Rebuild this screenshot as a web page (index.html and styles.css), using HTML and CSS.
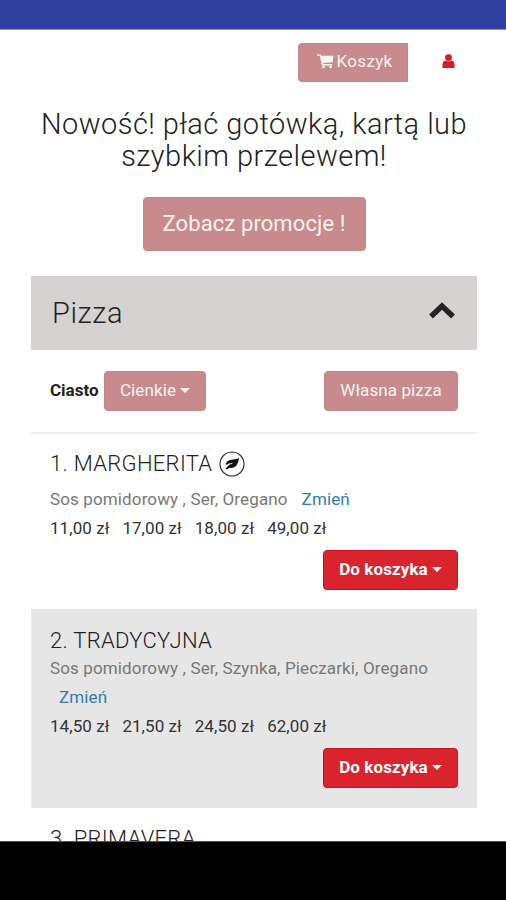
FILE: index.html
```html
<!DOCTYPE html>
<html lang="pl">
<head>
<meta charset="utf-8">
<title>Pizza</title>
<link rel="stylesheet" href="styles.css">
</head>
<body>
<div class="statusbar"></div>
<main class="page">
  <header class="topbar">
    <button class="btn btn-cart"><svg class="cart" viewBox="0 0 18 16"><path d="M0 1h4l.6 1.500H17.500L16.500 9.300 6.500 10l.3 1.300H16v1.400H5.300L3 2.700H0z" fill="currentColor"/><circle cx="6.800" cy="14.300" r="1.500" fill="currentColor"/><circle cx="14.500" cy="14.300" r="1.500" fill="currentColor"/></svg><span>Koszyk</span></button>
    <svg class="user" viewBox="0 0 14 16"><path d="M.5 15.500V12q0-4 3.500-4.500 3 2 6 0 3.500 .5 3.500 4.500v3.500z" fill="#dc1a24"/><circle cx="7" cy="4.300" r="3.700" fill="#dc1a24"/></svg>
  </header>
  <h1 class="headline">Nowość! płać gotówką, kartą lub<br>szybkim przelewem!</h1>
  <div class="promo"><button class="btn btn-promo">Zobacz promocje !</button></div>
  <section class="menu">
    <div class="category">
      <h2 class="category-name">Pizza</h2>
      <svg class="chevron" viewBox="0 0 28 19"><path d="M3 15.500 14 5l11 10.500" fill="none" stroke="#242424" stroke-width="5.500"/></svg>
    </div>
    <div class="options">
      <b class="options-label">Ciasto</b>
      <button class="btn btn-dough"><span>Cienkie</span><i class="caret"></i></button>
      <button class="btn btn-own">Własna pizza</button>
    </div>
    <article class="item item-first">
      <h3 class="name"><span>1. MARGHERITA</span><svg class="leaf" viewBox="0 0 26 26"><circle cx="13" cy="13" r="12" fill="#fff" stroke="#333" stroke-width="1.200"/><path d="M6.500 14C7.500 10 10.500 8.700 14 8.500q3.500-.3 6-1.300-1 6-3.500 8.300Q14 17.500 10.500 16.700L7.800 18.500 6.500 17.700Q9.500 13.500 14.500 11.800 9.500 12 6.500 14z" fill="#111"/></svg></h3>
      <p class="desc">Sos pomidorowy , Ser, Oregano<a class="change">Zmień</a></p>
      <p class="prices"><span>11,00 zł</span><span>17,00 zł</span><span>18,00 zł</span><span>49,00 zł</span></p>
      <div class="buy"><button class="btn btn-add"><span>Do koszyka</span><i class="caret"></i></button></div>
    </article>
    <article class="item item-alt">
      <h3 class="name"><span>2. TRADYCYJNA</span></h3>
      <p class="desc">Sos pomidorowy , Ser, Szynka, Pieczarki, Oregano<br><a class="change change-wrapped">Zmień</a></p>
      <p class="prices"><span>14,50 zł</span><span>21,50 zł</span><span>24,50 zł</span><span>62,00 zł</span></p>
      <div class="buy"><button class="btn btn-add"><span>Do koszyka</span><i class="caret"></i></button></div>
    </article>
    <article class="item item-last">
      <h3 class="name"><span>3. PRIMAVERA</span></h3>
    </article>
  </section>
</main>
<footer class="navbar"></footer>
</body>
</html>
```
FILE: styles.css
```css
* { box-sizing: border-box; }
body {
  margin: 0;
  height: 900px;
  display: flex;
  flex-direction: column;
  overflow: hidden;
  background: #fff;
  color: #222;
  font: 400 17px/29px Roboto, sans-serif;
}
h1, h2, h3, p { margin: 0; font-weight: 400; }
.statusbar { flex: none; height: 30px; background: #2f409f; border-bottom: 1px solid #8c94c8; }
.page { flex: none; height: 811px; overflow: hidden; padding: 0 29px 0 31px; }
.navbar { flex: 1; background: #000; border-top: 1px solid #555; }

.btn {
  display: flex;
  align-items: center;
  justify-content: center;
  height: 40px;
  padding: 0 0 3px;
  border: 1px solid #c58487;
  border-radius: 4px;
  background: #c88a8c;
  color: #fff5f0;
  font: 400 17px/24px Roboto, sans-serif;
  letter-spacing: 0.1px;
  white-space: nowrap;
}
.caret {
  margin: 1px 0 0 4px;
  border: 5px solid transparent;
  border-top-color: currentColor;
  border-bottom: 0;
}
.topbar { display: flex; align-items: flex-start; height: 77px; padding: 13px 22px 0 0; justify-content: flex-end; }
.btn-cart { width: 110px; height: 39px; padding-left: 3px; border-radius: 4px 0 0 4px; letter-spacing: 0.3px; }
.cart { width: 17px; height: 16px; margin-right: 3px; }
.user { width: 13px; height: 16px; margin: 10px 0 0 34px; }

.headline { height: 90px; padding-top: 1px; font-size: 29px; font-weight: 300; line-height: 32px; letter-spacing: 0.45px; text-align: center; white-space: nowrap; }
.promo { display: flex; justify-content: center; height: 79px; }
.btn-promo { width: 223px; height: 54px; padding-bottom: 1px; font-size: 22px; }

.category { display: flex; align-items: center; justify-content: space-between; height: 74px; padding: 0 21px; background: #d5d2d1; }
.category-name { font-size: 29px; font-weight: 300; letter-spacing: 0.6px; }
.chevron { width: 28px; height: 19px; margin-top: -6px; }
.options { display: flex; align-items: flex-start; height: 84px; padding: 21px 19px 0; border-bottom: 2px solid #eee; }
.options-label { width: 54px; font-weight: 700; line-height: 38px; }
.btn-dough { width: 102px; }
.btn-own { width: 134px; margin-left: auto; }

.item { padding: 15px 19px 0; }
.item-first { height: 175px; }
.item-alt { height: 199px; padding-top: 17px; background: #e6e6e6; }
.item-last { padding-top: 16px; }
.name { display: flex; align-items: center; height: 28px; font-size: 22px; font-weight: 300; letter-spacing: 0.3px; white-space: nowrap; }
.item-first .name { height: 36px; padding-bottom: 7px; }
.leaf { width: 26px; height: 26px; margin: 1px 0 0 7px; }
.desc { color: #777; letter-spacing: 0.13px; white-space: nowrap; }
.change { margin-left: 14px; color: #337ab7; }
.change-wrapped { margin-left: 9px; }
.prices { display: flex; gap: 13px; color: #333; letter-spacing: 0.07px; }
.buy { display: flex; justify-content: flex-end; padding-top: 7px; }
.btn-add { width: 135px; height: 40px; border-color: #c9101a; background: #da242d; color: #fff; font-weight: 700; }
```
